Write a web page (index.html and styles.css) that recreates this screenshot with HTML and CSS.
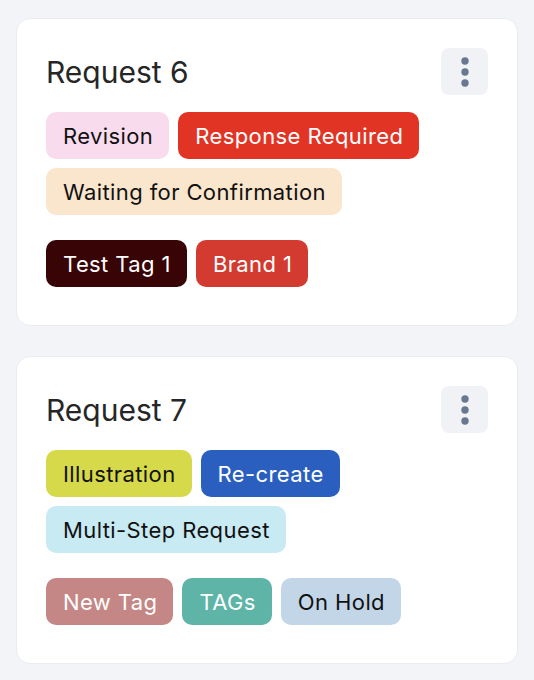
FILE: index.html
```html
<!DOCTYPE html>
<html lang="en">
<head>
<meta charset="utf-8">
<title>Requests</title>
<link rel="stylesheet" href="styles.css">
</head>
<body>
<main class="list">
  <section class="card">
    <header class="card-head">
      <h2 class="card-title">Request 6</h2>
      <button class="menu-btn" aria-label="More options">
        <svg width="8" height="30" viewBox="0 0 8 30"><circle cx="4" cy="4" r="3.7"/><circle cx="4" cy="15" r="3.7"/><circle cx="4" cy="26" r="3.7"/></svg>
      </button>
    </header>
    <div class="tags">
      <span class="tag tag-revision">Revision</span>
      <span class="tag tag-response">Response Required</span>
      <span class="tag tag-waiting">Waiting for Confirmation</span>
    </div>
    <div class="tags tags-custom">
      <span class="tag tag-test">Test Tag 1</span>
      <span class="tag tag-brand">Brand 1</span>
    </div>
  </section>

  <section class="card">
    <header class="card-head">
      <h2 class="card-title">Request 7</h2>
      <button class="menu-btn" aria-label="More options">
        <svg width="8" height="30" viewBox="0 0 8 30"><circle cx="4" cy="4" r="3.7"/><circle cx="4" cy="15" r="3.7"/><circle cx="4" cy="26" r="3.7"/></svg>
      </button>
    </header>
    <div class="tags">
      <span class="tag tag-illustration">Illustration</span>
      <span class="tag tag-recreate">Re-create</span>
      <span class="tag tag-multistep">Multi-Step Request</span>
    </div>
    <div class="tags tags-custom">
      <span class="tag tag-new">New Tag</span>
      <span class="tag tag-tags">TAGs</span>
      <span class="tag tag-hold">On Hold</span>
    </div>
  </section>
</main>
</body>
</html>
```

FILE: styles.css
```css
* { box-sizing: border-box; }

html, body {
  margin: 0;
  padding: 0;
  background: #f3f4f8;
}

body {
  font-family: Inter, "Noto Sans", sans-serif;
  color: #111;
}

.list {
  display: flex;
  flex-direction: column;
  gap: 30px;
  padding: 18px 16px 0 16px;
}

.card {
  background: #ffffff;
  border: 1px solid #eaecf1;
  border-radius: 14px;
  padding: 29px 29px 38px 29px;
}

.card-head {
  display: flex;
  align-items: center;
  justify-content: space-between;
  height: 47px;
  margin-bottom: 17px;
}

.card-title {
  margin: 0;
  font-size: 30px;
  font-weight: 400;
  color: #262626;
  letter-spacing: 0;
}

.menu-btn {
  width: 47px;
  height: 47px;
  border: none;
  border-radius: 8px;
  background: #f0f2f6;
  display: flex;
  align-items: center;
  justify-content: center;
  padding: 0;
  cursor: pointer;
}

.menu-btn svg { fill: #697891; display: block; }

.tags {
  display: flex;
  flex-wrap: wrap;
  gap: 9px;
}

.tags-custom { margin-top: 25px; }

.tag {
  display: inline-flex;
  align-items: center;
  height: 47px;
  padding: 0 16px 0 17px;
  border-radius: 10px;
  font-size: 22px;
  font-weight: 400;
  letter-spacing: 0.4px;
  white-space: nowrap;
}

.tag-revision { background: #f8dcee; color: #111; }
.tag-response { background: #e23424; color: #fff; }
.tag-waiting { background: #fae6cc; color: #111; }
.tag-test { background: #380405; color: #fff; }
.tag-brand { background: #d33b30; color: #fff; }
.tag-illustration { background: #d5d94a; color: #111; }
.tag-recreate { background: #2a5fbf; color: #fff; }
.tag-multistep { background: #c8eaf2; color: #111; }
.tag-new { background: #c48785; color: #fff; }
.tag-tags { background: #5db4a7; color: #fff; }
.tag-hold { background: #c2d6e8; color: #111; }
```
